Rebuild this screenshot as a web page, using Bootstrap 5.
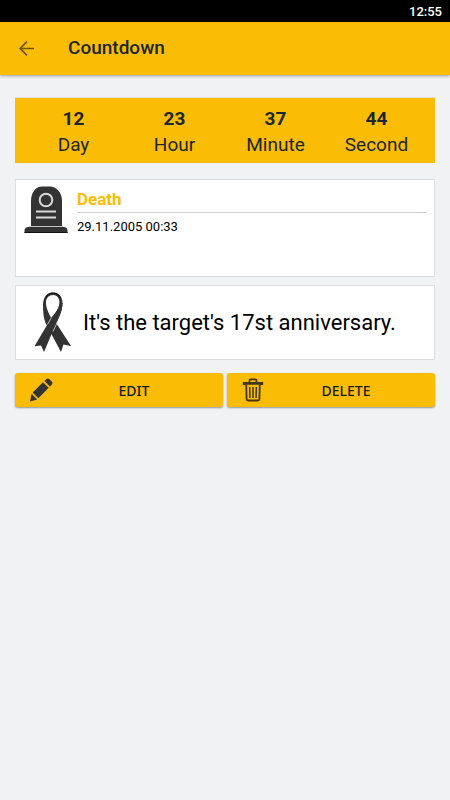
<!DOCTYPE html>
<html lang="en">
<head>
<meta charset="utf-8">
<meta name="viewport" content="width=device-width, initial-scale=1">
<title>Countdown</title>
<link href="https://cdn.jsdelivr.net/npm/bootstrap@5.3.0/dist/css/bootstrap.min.css" rel="stylesheet">
<style>
  :root { --amber: #fbbc05; --ink: #1c2733; --edge: #dcdde1; }
  body { font-family: Roboto, "Noto Sans", sans-serif; background: #f1f2f4; color: #000; }
  .status-bar { height: 22px; padding: 2px 8px 0; font-size: 13px; font-weight: 500; }
  .app-bar { height: 53px; padding: 0 18px; gap: 33px; background: var(--amber); box-shadow: 0 1px 3px rgba(0,0,0,.35); }
  .app-bar h1 { font-size: 19px; font-weight: 500; color: var(--ink); }
  .back-link { color: #6f560c; }
  .page-body { padding: 22px 15px; }
  .timer { background: var(--amber); color: var(--ink); padding: 8px 8px 5px; font-size: 19px; line-height: 26px; border-top: 1px solid var(--edge); }
  .panel { background: #fff; border: 1px solid var(--edge); }
  .event-panel { min-height: 98px; padding: 6px 7px 6px 8px; gap: 9px; margin-top: 16px; }
  .event-panel h2 { font-size: 17px; line-height: 26px; font-weight: 700; color: var(--amber); border-bottom: 1px solid #cfd0d6; }
  .event-panel time { font-size: 13px; line-height: 28px; }
  .note-panel { min-height: 75px; padding: 6px 16px; gap: 10px; margin-top: 8px; font-size: 22px; line-height: 26px; }
  .actions { gap: 4px; margin-top: 13px; }
  .btn-amber { --bs-btn-bg: var(--amber); --bs-btn-color: #16202c; --bs-btn-hover-bg: #efb200; --bs-btn-active-bg: #e0a800; --bs-btn-border-width: 0;
    height: 34px; padding: 0 8px 0 14px; border-radius: 3px; font-family: "Noto Sans", sans-serif; font-size: 14px; font-weight: 500; box-shadow: 0 1px 2px rgba(0,0,0,.4); }
</style>
</head>
<body>
<div class="status-bar bg-black text-white d-flex align-items-center justify-content-end"><span>12:55</span></div>
<header class="app-bar d-flex align-items-center position-relative">
  <a class="back-link d-flex" href="#" aria-label="Back">
    <svg width="17" height="17" viewBox="0 0 17 17" fill="none" stroke="currentColor" stroke-width="1.7" aria-hidden="true"><path d="M16 8.500H2M9 1.700 2.200 8.500 9 15.300"/></svg>
  </a>
  <h1 class="m-0">Countdown</h1>
</header>
<main class="page-body">
  <section class="timer row g-0 text-center" aria-label="Time left">
    <div class="col"><div class="fw-bold">12</div><div>Day</div></div>
    <div class="col"><div class="fw-bold">23</div><div>Hour</div></div>
    <div class="col"><div class="fw-bold">37</div><div>Minute</div></div>
    <div class="col"><div class="fw-bold">44</div><div>Second</div></div>
  </section>

  <section class="event-panel panel d-flex align-items-start">
    <svg class="flex-shrink-0" width="44" height="48" viewBox="0 0 44 48" aria-hidden="true">
      <path fill="#333" d="M7 40V15C7 6 12 .5 18 .5h8c6 0 12 5.500 12 14.500v25z"/>
      <path fill="#333" d="M.5 47v-2q0-4 4-4h35q4 0 4 4v2z"/>
      <path stroke="#111" d="M.5 46.500h43"/>
      <g fill="none" stroke="#d8d8d8" stroke-width="2"><circle cx="22" cy="14" r="6.300"/><path d="M12 25.500h20M12 31.500h20"/></g>
      <path stroke="#aaa" stroke-width=".7" d="M5 40.500h34"/>
    </svg>
    <div class="flex-grow-1">
      <h2 class="m-0">Death</h2>
      <time class="d-block" datetime="2005-11-29T00:33">29.11.2005 00:33</time>
    </div>
  </section>

  <section class="note-panel panel d-flex align-items-center">
    <svg class="flex-shrink-0" width="41" height="61" viewBox="0 0 41 61" aria-hidden="true">
      <path fill="#333" d="M21 .5C27 .5 30.500 5 30.500 11c0 7-3 13-7 19L39 54l-7.500-1.500L29 60 13.500 31C11.500 26 11 20 11 13 11 5 15 .5 21 .5z"/>
      <path fill="#fff" d="M21 3c4 0 6.500 3 6.500 7.500 0 6-4.500 11-8.300 15.500C15.500 19 14 15 14 10.500 14 6 17 3 21 3z"/>
      <path fill="#333" d="M30.500 11c0 7.500-3 14-7.500 23L12 60l-3-6.500-6.500.8L16.500 30.500C21 23 27 18.500 27.800 10z"/>
      <path fill="none" stroke="#ddd" stroke-width=".8" d="M19 26.200 15.500 32.500M25 31l-4 8.500"/>
      <path fill="none" stroke="#111" stroke-width="1.200" d="M14 5.500C16 2 18 1 21 1s5 1 7 4.500"/>
    </svg>
    <span>It's the target's 17st anniversary.</span>
  </section>

  <div class="actions d-flex">
    <button type="button" class="btn btn-amber d-flex align-items-center flex-fill w-50">
      <svg class="flex-shrink-0" width="24" height="24" viewBox="0 0 24 24" fill="#333" aria-hidden="true"><path d="m15.500 3 2-2q1.500-1.300 3 .2l2.200 2.300q1.500 1.500.2 3l-2 2zM14 4.200l5.700 5.600L9.300 20.200 3.700 14.600zM2.600 15.800 8.200 21.400 1 23.500z"/></svg>
      <span class="flex-grow-1">EDIT</span>
    </button>
    <button type="button" class="btn btn-amber d-flex align-items-center flex-fill w-50">
      <svg class="flex-shrink-0" width="24" height="24" viewBox="0 0 24 24" fill="none" stroke="#42370f" aria-hidden="true"><path stroke-width="1.800" d="M8.500 4V2.500Q8.500 1.400 9.600 1.400h4.800q1.100 0 1.100 1.100V4M5.200 6.500 5.600 21q.1 1.500 1.500 1.500h9.800q1.400 0 1.500-1.500l.4-14.500"/><path stroke-width="2.800" d="M3.200 6.900V5.300h17.600v1.600"/><path stroke-width="1.500" d="m8.700 9 .2 11M12 9v11M15.300 9l-.2 11"/></svg>
      <span class="flex-grow-1">DELETE</span>
    </button>
  </div>
</main>
<script src="https://cdn.jsdelivr.net/npm/bootstrap@5.3.0/dist/js/bootstrap.bundle.min.js"></script>
</body>
</html>
